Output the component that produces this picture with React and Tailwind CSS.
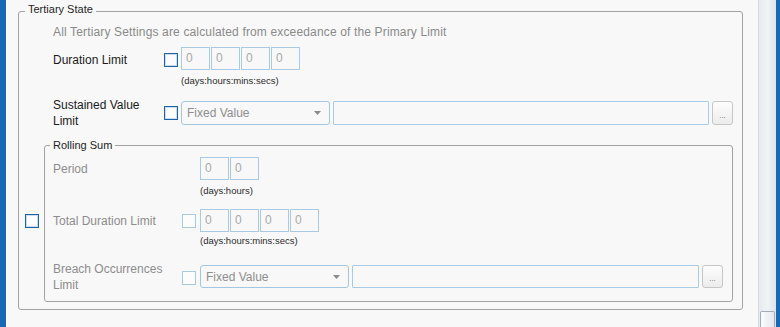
import React from 'react';

// Small WPF-like form controls
const CheckBox = ({ disabled = false, className = '' }) => (
  <span
    className={`block w-[14px] h-[14px] shrink-0 bg-[#fcfcfc] border ${
      disabled ? 'border-[#a9c9e3]' : 'border-[#1f62a6] shadow-[inset_0_0_0_1px_rgba(110,160,210,0.35)]'
    } ${className}`}
  />
);

const NumBoxes = ({ count }) => (
  <div className="flex gap-[1px]">
    {Array.from({ length: count }).map((_, i) => (
      <div
        key={i}
        className="w-[29px] h-[23px] border border-[#a9cae4] pl-[4px] text-[12px] leading-[21px] text-[#a9a9a9]"
      >
        0
      </div>
    ))}
  </div>
);

const Hint = ({ children, className = '' }) => (
  <div className={`text-[9.5px] leading-[12px] text-[#2b2b2b] ${className}`}>{children}</div>
);

const ValueRow = ({ h }) => (
  <div className="flex flex-1 gap-[3px]">
    <div
      className={`w-[149px] ${h} shrink-0 rounded-[3px] border border-[#a3c6e3] flex items-center justify-between pl-[5px] pr-[8px] text-[12px] text-[#8e8e8e]`}
    >
      <span>Fixed Value</span>
      <svg width="7" height="4" viewBox="0 0 7 4">
        <path d="M0 0h7L3.5 4z" fill="#8a8a8a" />
      </svg>
    </div>
    <div className={`flex-1 ${h} border border-[#a8cbe7] rounded-[1px]`} />
    <div
      className={`w-[21px] ${h} shrink-0 rounded-[3px] border border-[#c6c6c6] bg-gradient-to-b from-[#fdfdfd] to-[#ececec] flex items-end justify-center pb-[4px] text-[8px] leading-[8px] text-[#6f6f6f]`}
    >
      ...
    </div>
  </div>
);

export default function App() {
  return (
    <div className="w-[780px] h-[327px] flex overflow-hidden bg-[#f8f8f8] font-['Liberation_Sans',Arial,sans-serif]">
      {/* left window edge */}
      <div className="w-[6px] shrink-0 bg-[#1868b4]" />

      <div className="flex-1 pl-[12px] pt-[2px]">
        <fieldset className="w-[725px] rounded-[3px] border border-[#a2a2a2] pl-[6px] pr-[9px] pb-[7px]">
          <legend className="px-[3px] pb-[4px] text-[11px] leading-[14px] text-[#1e1e1e]">
            Tertiary State
          </legend>

          <div className="ml-[28px] mt-[4px] text-[12px] leading-[16px] tracking-[0.15px] text-[#8a8a8a]">
            All Tertiary Settings are calculated from exceedance of the Primary Limit
          </div>

          {/* Duration Limit */}
          <div className="ml-[28px] mt-[7px] flex items-start">
            <div className="w-[111px] mt-[5px] text-[12px] leading-[16px] text-[#1b1b1b]">Duration Limit</div>
            <CheckBox className="mt-[6px]" />
            <div className="ml-[3px]">
              <NumBoxes count={4} />
              <Hint className="mt-[5px]">(days:hours:mins:secs)</Hint>
            </div>
          </div>

          {/* Sustained Value Limit */}
          <div className="ml-[28px] mt-[10px] flex items-center">
            <div className="w-[111px] text-[12px] leading-[16px] text-[#1b1b1b]">
              Sustained Value
              <br />
              Limit
            </div>
            <CheckBox />
            <div className="ml-[3px] flex flex-1">
              <ValueRow h="h-[24px]" />
            </div>
          </div>

          {/* Rolling Sum */}
          <div className="mt-[9px] flex items-center">
            <CheckBox className="mt-[1px]" />
            <fieldset className="ml-[5px] flex-1 rounded-[3px] border border-[#a2a2a2] pl-[8px] pr-[9px] pb-[8px]">
              <legend className="-ml-[3px] px-[3px] text-[11px] leading-[14px] text-[#1e1e1e]">
                Rolling Sum
              </legend>

              <div className="mt-[5px] flex items-start">
                <div className="w-[147px] mt-[4px] text-[12px] leading-[16px] text-[#8d8d8d]">Period</div>
                <div>
                  <NumBoxes count={2} />
                  <Hint className="mt-[5px]">(days:hours)</Hint>
                </div>
              </div>

              <div className="mt-[12px] flex items-start">
                <div className="w-[129px] mt-[4px] text-[12px] leading-[16px] text-[#8d8d8d]">
                  Total Duration Limit
                </div>
                <CheckBox disabled className="mt-[5px]" />
                <div className="ml-[4px]">
                  <NumBoxes count={4} />
                  <Hint className="mt-[3px]">(days:hours:mins:secs)</Hint>
                </div>
              </div>

              <div className="mt-[14px] flex items-start">
                <div className="w-[129px] text-[12px] leading-[16px] text-[#8d8d8d]">
                  Breach Occurrences
                  <br />
                  Limit
                </div>
                <CheckBox disabled className="mt-[10px]" />
                <div className="ml-[4px] mt-[4px] flex flex-1">
                  <ValueRow h="h-[23px]" />
                </div>
              </div>
            </fieldset>
          </div>
        </fieldset>
      </div>

      {/* vertical scrollbar */}
      <div className="w-[18px] shrink-0 flex flex-col border-l border-[#d6dbe0] bg-gradient-to-r from-[#e6eaee] via-[#f0f3f6] to-[#dde3e9]">
        <div className="flex-1" />
        <div className="mx-[1px] h-[16px] rounded-t-[2px] border border-b-0 border-[#a3acb6] bg-gradient-to-r from-[#fbfcfd] to-[#e3e8ee]" />
      </div>
      {/* right window edge */}
      <div className="w-[4px] shrink-0 bg-[#1868b4]" />
    </div>
  );
}
